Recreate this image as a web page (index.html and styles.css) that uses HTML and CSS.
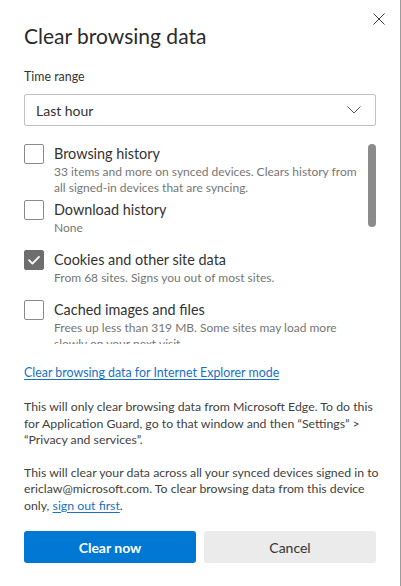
FILE: index.html
```html
<!DOCTYPE html>
<html lang="en">
<head>
<meta charset="utf-8">
<title>Clear browsing data</title>
<link rel="stylesheet" href="styles.css">
</head>
<body>
<div class="dialog">
  <div class="header">
    <h1 class="title">Clear browsing data</h1>
    <button class="close" aria-label="Close">
      <svg width="12" height="12" viewBox="0 0 12 12"><path d="M0.5 0.5 L11.5 11.5 M11.5 0.5 L0.5 11.5" stroke="#3a3a3a" stroke-width="1" fill="none"/></svg>
    </button>
  </div>

  <div class="field-label">Time range</div>
  <div class="select">
    <span class="select-value">Last hour</span>
    <svg class="chevron" width="14" height="8" viewBox="0 0 14 8"><path d="M0.5 0.5 L7 7 L13.5 0.5" stroke="#555" stroke-width="1" fill="none"/></svg>
  </div>

  <div class="scroll">
    <div class="list">
      <div class="item">
        <span class="box"></span>
        <div class="item-text">
          <div class="item-label">Browsing history</div>
          <div class="item-desc">33 items and more on synced devices. Clears history from all signed-in devices that are syncing.</div>
        </div>
      </div>
      <div class="item">
        <span class="box"></span>
        <div class="item-text">
          <div class="item-label">Download history</div>
          <div class="item-desc">None</div>
        </div>
      </div>
      <div class="item">
        <span class="box checked">
          <svg width="20" height="20" viewBox="0 0 20 20"><path d="M5 10.2 L8.4 13.6 L15 6.8" stroke="#fff" stroke-width="1.8" fill="none" stroke-linecap="round" stroke-linejoin="round"/></svg>
        </span>
        <div class="item-text">
          <div class="item-label">Cookies and other site data</div>
          <div class="item-desc">From 68 sites. Signs you out of most sites.</div>
        </div>
      </div>
      <div class="item">
        <span class="box"></span>
        <div class="item-text">
          <div class="item-label">Cached images and files</div>
          <div class="item-desc">Frees up less than 319 MB. Some sites may load more slowly on your next visit.</div>
        </div>
      </div>
    </div>
    <div class="track"><div class="thumb"></div></div>
  </div>

  <a class="link ie-link" href="#">Clear browsing data for Internet Explorer mode</a>

  <p class="para first">This will only clear browsing data from Microsoft Edge. To do this for Application Guard, go to that window and then “Settings” &gt; “Privacy and services”.</p>

  <p class="para second">This will clear your data across all your synced devices signed in to ericlaw@microsoft.com. To clear browsing data from this device only, <a class="link" href="#">sign out first</a>.</p>

  <div class="buttons">
    <button class="btn primary">Clear now</button>
    <button class="btn secondary">Cancel</button>
  </div>
</div>
</body>
</html>
```

FILE: styles.css
```css
* { box-sizing: border-box; }
html, body { margin: 0; padding: 0; background: #fff; }
body {
  font-family: Lato, "Noto Sans", sans-serif;
  color: #333;
}
.dialog {
  width: 401px;
  height: 586px;
  border-right: 1px solid #9c9c9c;
  background: #fff;
  padding: 0 24px;
  display: flex;
  flex-direction: column;
  overflow: hidden;
}
.header {
  display: flex;
  justify-content: space-between;
  align-items: flex-start;
  padding-top: 7px;
  margin-right: -15px;
}
.title {
  margin: 15px 0 0 0;
  font-size: 21px;
  line-height: 28px;
  font-weight: 400;
  color: #2b2b2b;
}
.close {
  width: 24px;
  height: 24px;
  border: 0;
  padding: 0;
  background: transparent;
  display: flex;
  align-items: center;
  justify-content: center;
}
.field-label {
  margin-top: 18px;
  font-size: 12.4px;
  line-height: 18px;
  color: #333;
}
.select {
  flex: none;
  margin-top: 8px;
  height: 32px;
  border: 1px solid #c2c2c2;
  border-radius: 2px;
  display: flex;
  align-items: center;
  justify-content: space-between;
  padding: 0 14px 0 11px;
}
.select-value {
  font-size: 14px;
  color: #333;
}
.scroll {
  flex: none;
  margin-top: 10px;
  height: 208px;
  padding-top: 8px;
  overflow: hidden;
  display: flex;
  align-items: flex-start;
}
.list {
  flex: 1;
  display: flex;
  flex-direction: column;
  gap: 4px;
}
.item {
  flex: none;
  display: flex;
  gap: 10px;
  min-height: 46px;
}
.box {
  flex: none;
  width: 20px;
  height: 20px;
  border: 1px solid #8a8a8a;
  border-radius: 2px;
  background: #fff;
}
.box.checked {
  background: #6e6e6e;
  border-color: #6e6e6e;
}
.box.checked svg {
  display: block;
  margin: -1px;
}
.item-label {
  font-size: 14.4px;
  line-height: 20px;
  color: #333;
}
.item-desc {
  font-size: 12px;
  line-height: 16px;
  color: #767676;
}
.track {
  flex: none;
  width: 8px;
  margin-left: 4px;
}
.thumb {
  width: 8px;
  height: 83px;
  border-radius: 4px;
  background: #8b8b8b;
}
.link {
  color: #1a6fc6;
  text-decoration: underline;
  text-underline-offset: 2px;
}
.ie-link {
  flex: none;
  margin-top: 20px;
  font-size: 12.4px;
  line-height: 18px;
  align-self: flex-start;
}
.para {
  flex: none;
  margin: 0 -3px 0 0;
  font-size: 12.3px;
  line-height: 16.5px;
  color: #424242;
}
.para.first { margin-top: 17px; }
.para.second { margin-top: 16px; }
.buttons {
  flex: none;
  margin-top: 17px;
  display: flex;
  gap: 8px;
}
.btn {
  flex: 1;
  height: 32px;
  border: 0;
  border-radius: 3px;
  font-family: inherit;
  font-size: 14px;
}
.btn.primary {
  background: #0078d4;
  color: #fff;
  font-weight: 700;
}
.btn.secondary {
  background: #ebebeb;
  color: #333;
}
```
